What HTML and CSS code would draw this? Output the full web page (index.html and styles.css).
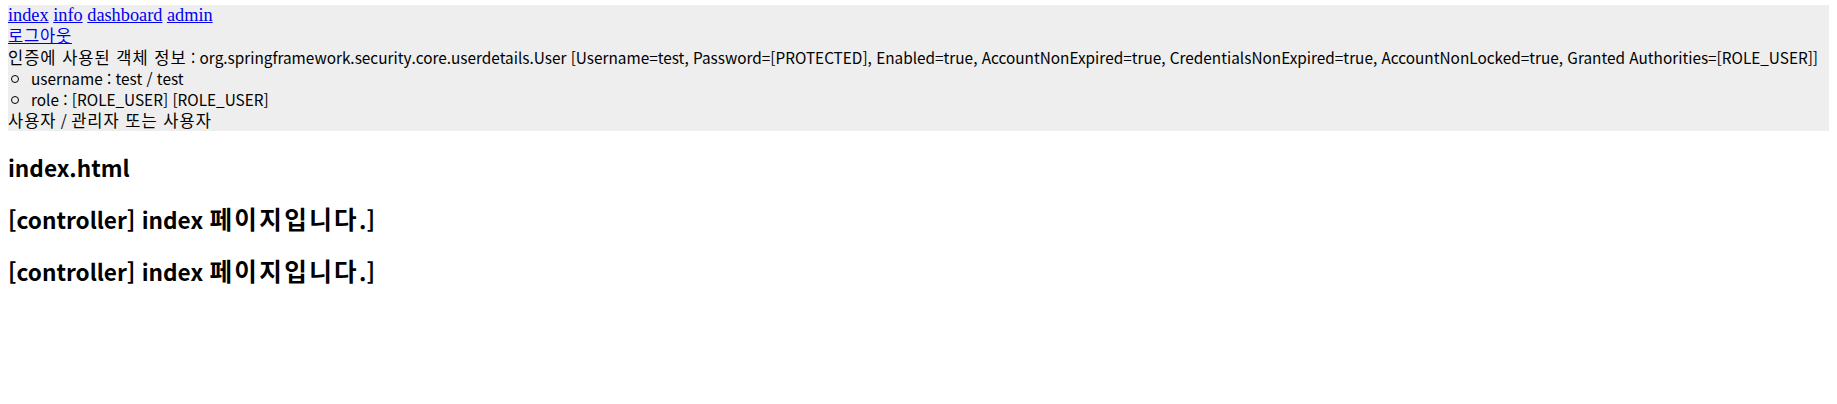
FILE: index.html
```html
<!DOCTYPE html>
<html lang="ko">
<head>
<meta charset="utf-8">
<title>index</title>
<link rel="stylesheet" href="styles.css">
</head>
<body>
<div class="info">
  <div class="nav"><a href="#">index</a> <a href="#">info</a> <a href="#">dashboard</a> <a href="#">admin</a></div>
  <div class="logout"><a href="#">로그아웃</a></div>
  <div class="line"><span class="ko">인증에 사용된 객체 정보</span> : org.springframework.security.core.userdetails.User [Username=test, Password=[PROTECTED], Enabled=true, AccountNonExpired=true, CredentialsNonExpired=true, AccountNonLocked=true, Granted Authorities=[ROLE_USER]]</div>
  <ul class="list">
    <li>username : test / test</li>
    <li>role : [ROLE_USER] [ROLE_USER]</li>
  </ul>
  <div class="line"><span class="ko">사용자</span> / <span class="ko">관리자 또는 사용자</span></div>
</div>
<h3 class="title">index.html</h3>
<h3 class="title">[controller] index <span class="ko">페이지입니다</span>.]</h3>
<h3 class="title">[controller] index <span class="ko">페이지입니다</span>.]</h3>
</body>
</html>
```
FILE: styles.css
```css
body {
  margin: 5px 8px 8px;
  background: #fff;
  color: #000;
  font-family: "Noto Sans CJK KR", "Noto Sans", sans-serif;
}
.info {
  background: #eeeeee;
  font-size: 15.35px;
  line-height: 21px;
}
.info .ko {
  font-size: 16.5px;
  letter-spacing: 1px;
  line-height: 1;
}
.info a {
  color: #0000ee;
  text-decoration: underline;
}
.nav,
.logout,
.line {
  height: 21px;
  white-space: nowrap;
}
.nav {
  font-family: "Liberation Serif", "Noto Sans CJK KR", serif;
  font-size: 18.3px;
}
.logout {
  font-family: "Noto Sans CJK KR", sans-serif;
  font-size: 16.5px;
  letter-spacing: 0.8px;
  line-height: 19px;
}
.list {
  list-style: none;
  margin: 0;
  padding: 0;
}
.list li {
  display: flex;
  align-items: center;
  height: 21px;
}
.list li::before {
  content: "";
  width: 6px;
  height: 6px;
  border: 1.5px solid #000;
  border-radius: 50%;
  margin: 0 12px 0 3px;
}
.title {
  font-size: 22.6px;
  font-weight: bold;
  line-height: 28px;
  margin: 23px 0 24px;
}
.title .ko {
  font-size: 24.5px;
  letter-spacing: 2.4px;
  line-height: 1;
}
```
